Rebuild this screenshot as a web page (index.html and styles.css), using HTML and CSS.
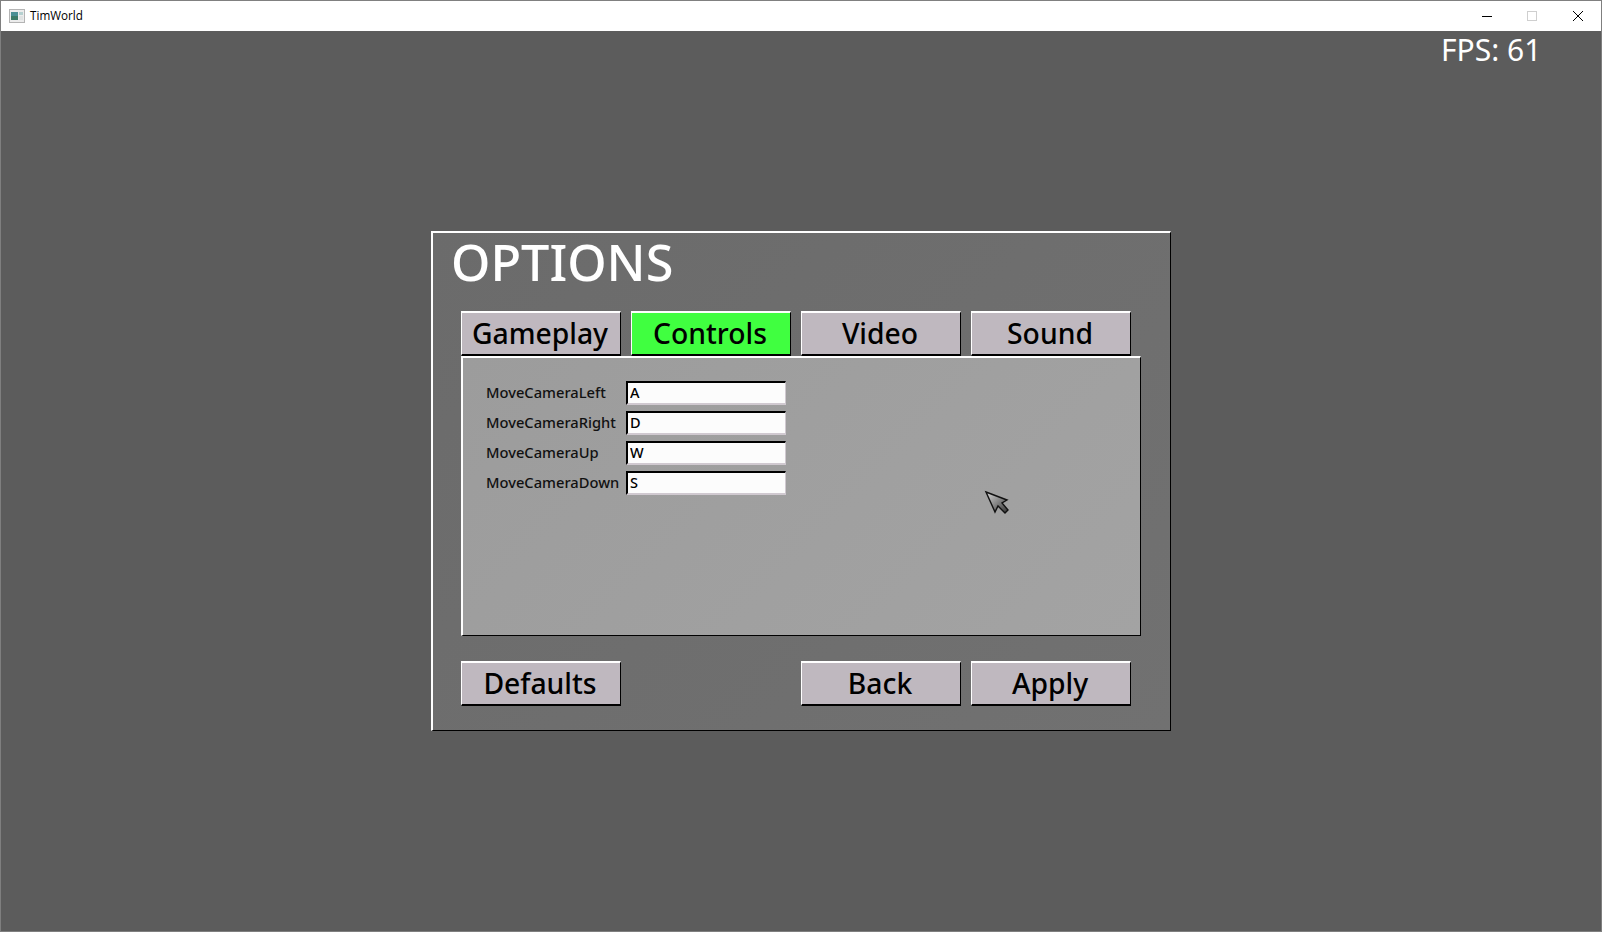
FILE: index.html
```html
<!DOCTYPE html>
<html lang="en">
<head>
    <meta charset="UTF-8">
    <title>TimWorld</title>
    <link rel="stylesheet" href="styles.css">
</head>
<body>

<div class="window">
    <div class="titlebar">
        <svg class="app-icon" width="16" height="14" viewBox="0 0 16 14">
            <rect x="0.5" y="0.5" width="15" height="13" fill="#ececec" stroke="#b4b4b4"/>
            <rect x="2" y="3" width="7" height="8" fill="#4a8f94"/>
            <rect x="2" y="7" width="7" height="4" fill="#3c7a66"/>
            <rect x="10" y="3" width="4" height="3" fill="#b5d0d0"/>
            <rect x="10" y="7" width="4" height="4" fill="#dfe2e2"/>
        </svg>
        <span class="app-name">TimWorld</span>
        <div class="window-controls">
            <svg class="control" width="46" height="30" viewBox="0 0 46 30">
                <path d="M19 15.5h10" stroke="#000" fill="none"/>
            </svg>
            <svg class="control" width="46" height="30" viewBox="0 0 46 30">
                <rect x="18.5" y="10.5" width="9" height="9" stroke="#cfcfcf" fill="none"/>
            </svg>
            <svg class="control" width="46" height="30" viewBox="0 0 46 30">
                <path d="M18 10l10 10M28 10l-10 10" stroke="#000" fill="none"/>
            </svg>
        </div>
    </div>

    <div class="game">
        <div class="fps">FPS: 61</div>

        <div class="panel">
            <h1>OPTIONS</h1>
            <div class="tabs">
                <button class="btn">Gameplay</button>
                <button class="btn active">Controls</button>
                <button class="btn">Video</button>
                <button class="btn">Sound</button>
            </div>

            <div class="tab-body">
                <div class="field">
                    <label>MoveCameraLeft</label>
                    <input type="text" value="A" readonly>
                </div>
                <div class="field">
                    <label>MoveCameraRight</label>
                    <input type="text" value="D" readonly>
                </div>
                <div class="field">
                    <label>MoveCameraUp</label>
                    <input type="text" value="W" readonly>
                </div>
                <div class="field">
                    <label>MoveCameraDown</label>
                    <input type="text" value="S" readonly>
                </div>
            </div>

            <div class="actions">
                <button class="btn">Defaults</button>
                <button class="btn push">Back</button>
                <button class="btn">Apply</button>
            </div>
        </div>

        <!-- game cursor -->
        <svg class="cursor" width="26" height="25" viewBox="0 0 26 25">
            <defs>
                <linearGradient id="cursorFill" x1="0" y1="0" x2="1" y2="1">
                    <stop offset="0" stop-color="#d8d8d8"/>
                    <stop offset="1" stop-color="#333"/>
                </linearGradient>
            </defs>
            <path d="M2 2L23 10L18 13L24 20L21 23L14 16L11 22Z" fill="url(#cursorFill)" stroke="#111" stroke-width="1.4"/>
        </svg>
    </div>
</div>

</body>
</html>
```

FILE: styles.css
```css
html, body {
    margin: 0;
    height: 100%;
}
body {
    font-family: "Noto Sans", sans-serif;
    overflow: hidden;
}
.window {
    box-sizing: border-box;
    height: 932px;
    display: flex;
    flex-direction: column;
    border: 1px solid #7f7f7f;
    border-top-color: #808080;
}
.titlebar {
    height: 30px;
    background: #fff;
    display: flex;
    align-items: center;
    flex-shrink: 0;
}
.app-icon {
    margin-left: 8px;
    margin-right: 5px;
}
.app-name {
    position: relative;
    top: -1px;
    font-family: "Open Sans", sans-serif;
    font-size: 11.7px;
    color: #000;
}
.window-controls {
    margin-left: auto;
    display: flex;
}
.control {
    display: block;
}
.game {
    position: relative;
    flex: 1;
    background: #5c5c5c;
    display: flex;
    align-items: center;
    justify-content: center;
}
.fps {
    position: absolute;
    top: 0;
    left: 1440px;
    font-size: 30px;
    line-height: 38px;
    color: #fff;
}
.panel {
    box-sizing: border-box;
    width: 740px;
    height: 500px;
    padding: 0 28px;
    background: linear-gradient(135deg, #6b6b6b, #717171);
    border-style: solid;
    border-width: 2px 1px 1px 2px;
    border-color: #fff #000 #000 #fff;
}
h1 {
    margin: -1px 0 0 -10px;
    height: 79px;
    font-size: 50.3px;
    font-weight: 500;
    line-height: 60px;
    color: #fff;
}
.tabs, .actions {
    display: flex;
    gap: 10px;
}
.btn {
    box-sizing: border-box;
    width: 160px;
    height: 45px;
    padding: 0 2px 2px 0;
    font-family: "Noto Sans", sans-serif;
    font-size: 28.3px;
    font-weight: 500;
    line-height: 40px;
    color: #000;
    background: #bfb8bf;
    border-style: solid;
    border-width: 2px 1px 2px 1px;
    border-color: #fff #000 #000 #fff;
}
.btn.active {
    background: #40ff40;
}
.push {
    margin-left: auto;
}
.tab-body {
    box-sizing: border-box;
    width: 680px;
    height: 280px;
    padding: 23px 0 0 23px;
    background: linear-gradient(135deg, #9c9c9c, #a3a3a3);
    border-style: solid;
    border-width: 2px 1px 1px 2px;
    border-color: #fff #000 #000 #fff;
}
.field {
    display: flex;
    align-items: center;
    height: 24px;
    margin-bottom: 6px;
}
.field label {
    position: relative;
    top: -1px;
    width: 140px;
    font-size: 14.7px;
    font-weight: 500;
    color: #111;
}
.field input {
    box-sizing: border-box;
    width: 160px;
    height: 24px;
    padding: 0 2px 2px;
    font-family: "Noto Sans", sans-serif;
    font-size: 14.5px;
    font-weight: 500;
    color: #000;
    background: #fcfcfc;
    border-style: solid;
    border-width: 2px 1px 2px 2px;
    border-color: #000 #d0c9d0 #d0c9d0 #000;
    border-radius: 0;
    outline: none;
}
.actions {
    width: 670px;
    margin-top: 25px;
}
.cursor {
    position: absolute;
    left: 983px;
    top: 459px;
}
```
